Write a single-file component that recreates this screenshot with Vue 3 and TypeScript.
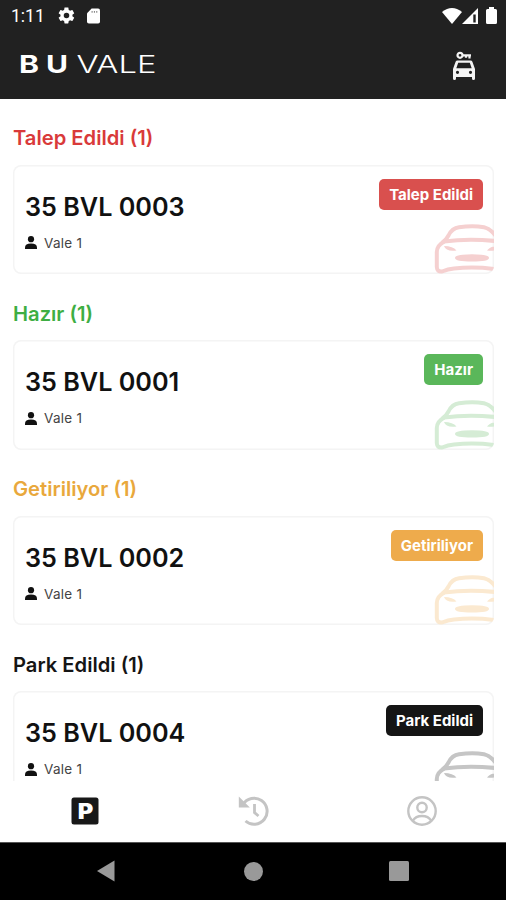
<script setup lang="ts">
interface Group {
  key: string
  label: string
  plate: string
  valet: string
}

const groups: Group[] = [
  { key: 'requested', label: 'Talep Edildi', plate: '35 BVL 0003', valet: 'Vale 1' },
  { key: 'ready', label: 'Hazır', plate: '35 BVL 0001', valet: 'Vale 1' },
  { key: 'bringing', label: 'Getiriliyor', plate: '35 BVL 0002', valet: 'Vale 1' },
  { key: 'parked', label: 'Park Edildi', plate: '35 BVL 0004', valet: 'Vale 1' },
]
</script>

<template>
  <div class="screen">
    <header class="top">
      <div class="status">
        <span class="clock">1:11</span>
        <svg class="gear" viewBox="0 0 24 24"><path fill="#fff" fill-rule="evenodd" d="M19.4 13c.1-.3.1-.7.1-1s0-.7-.1-1l2.1-1.600c.2-.2.3-.4.1-.7l-2-3.400c-.1-.2-.4-.3-.6-.2l-2.500 1c-.5-.4-1.100-.7-1.700-1L14.400 2.400c0-.2-.2-.4-.5-.4h-4c-.2 0-.5.2-.5.4L9 5.100c-.6.3-1.200.6-1.700 1l-2.500-1c-.2-.1-.5 0-.6.2l-2 3.400c-.1.2-.1.500.1.7L4.500 11c0 .3-.1.7-.1 1s0 .7.100 1l-2.200 1.600c-.2.2-.2.400-.1.700l2 3.400c.1.2.4.3.6.2l2.500-1c.5.400 1.100.7 1.700 1l.4 2.700c0 .2.200.400.500.400h4c.2 0 .500-.200.500-.400l.4-2.700c.600-.3 1.200-.6 1.700-1l2.500 1c.2.100.500 0 .600-.2l2-3.400c.1-.2.100-.500-.100-.700zM12 15.500a3.500 3.500 0 1 1 0-7 3.500 3.500 0 0 1 0 7z" /></svg>
        <svg class="sd" viewBox="0 0 14 16"><path fill="#fff" d="M5 0h7a2 2 0 0 1 2 2v12a2 2 0 0 1-2 2H2a2 2 0 0 1-2-2V5z" /><path stroke="#888" stroke-width="1.200" d="M5.500 2.500v2M8 2.500v2M10.500 2.500v2" /></svg>
        <span class="grow"></span>
        <svg class="wifi" viewBox="0 0 20 16"><path fill="#fff" d="M0 4Q10-4 20 4L10 16z" /></svg>
        <svg class="signal" viewBox="0 0 16 16"><path fill="#fff" fill-rule="evenodd" d="M16 0v16H0zM11.300 6.500v8h2.400v-8z" /></svg>
        <svg class="battery" viewBox="0 0 11 17"><path fill="#fff" d="M3 2V0h5v2h1.500Q11 2 11 3.500v12Q11 17 9.500 17h-8Q0 17 0 15.500v-12Q0 2 1.500 2z" /></svg>
      </div>
      <div class="brand">
        <svg class="logo" viewBox="0 0 144 40" fill="#fff">
          <text class="heavy" x="1" y="28" textLength="20" lengthAdjust="spacingAndGlyphs">B</text>
          <text class="heavy" x="28" y="28" textLength="22" lengthAdjust="spacingAndGlyphs">U</text>
          <text class="thin" x="58.500" y="28" textLength="80" lengthAdjust="spacingAndGlyphs">VALE</text>
        </svg>
        <svg class="carkey" viewBox="0 0 24 30">
          <path fill="none" stroke="#f4f4f4" stroke-width="2.200" d="M10 4.300h9M14 4.300v2.500M17.500 4.300v3.200" />
          <circle cx="8" cy="4.300" r="2.500" fill="none" stroke="#f4f4f4" stroke-width="2.200" />
          <path fill="#f4f4f4" fill-rule="evenodd" d="M5.500 9.500h13q1.400 0 1.900 1.300L23 18v9.500q0 1.500-1.500 1.500T20 27.500V26H4v1.500Q4 29 2.500 29T1 27.500V18l2.600-7.200Q4.100 9.500 5.500 9.500zM6.200 11.700l-1.900 5.600h15.400l-1.900-5.600zM5.500 19.700a1.600 1.600 0 1 0 0 3.200 1.600 1.600 0 0 0 0-3.200zM18.500 19.700a1.600 1.600 0 1 0 0 3.200 1.600 1.600 0 0 0 0-3.200z" />
        </svg>
      </div>
    </header>

    <main class="list">
      <section v-for="g in groups" :key="g.key" class="group" :class="g.key">
        <h2>{{ g.label }} (1)</h2>
        <article class="card">
          <div class="info">
            <div class="plate">{{ g.plate }}</div>
            <div class="valet">
              <svg viewBox="0 0 12 13"><circle cx="6" cy="3.200" r="3.100" /><path d="M0 13v-1.500Q0 7.500 6 7.500t6 4V13z" /></svg>
              <span>{{ g.valet }}</span>
            </div>
          </div>
          <span class="badge">{{ g.label }}</span>
          <svg class="car" viewBox="0 0 60 50">
            <g fill="none" stroke="currentColor" stroke-width="4" stroke-linecap="round" stroke-linejoin="round">
              <path d="M9 18Q12 16 14.500 11.500Q18 4 25 3.200Q39 1.500 50 3.200Q56 4.500 61 11" />
              <path d="M10 17.500Q36 14 66 17.500" />
              <path d="M9.500 18Q3 21.500 2.800 28V43Q3 48 8 47.500Q14 45 20 44.500Q40 42.500 60 45" />
            </g>
            <path fill="currentColor" d="M10 22Q19 22 22.500 26.500Q12 28 10 22zM65 22Q56 22 53 26.500Q63 28 65 22z" />
            <path fill="currentColor" d="M21 34Q21 30.300 38 30.300T55 34Q55 37.500 38 37.500T21 34z" />
          </svg>
        </article>
      </section>
    </main>

    <nav class="tabs">
      <div class="tab first">
        <svg viewBox="0 0 32 32"><rect x="2.500" y="2.500" width="27" height="27" rx="2.500" fill="#181818" /><text class="park" x="8.800" y="23.500" textLength="15.500" lengthAdjust="spacingAndGlyphs" fill="#fff">P</text></svg>
      </div>
      <div class="tab mid">
        <svg viewBox="0 0 32 32" fill="none" stroke="#c4c4c4"><path stroke-width="3" d="M5 9.500A13 13 0 1 1 7.500 26" /><path fill="#c4c4c4" stroke="none" d="M.8 1.500v11h11z" /><path stroke-width="2.800" d="M16.500 9v8.500l4 3.500" /></svg>
      </div>
      <div class="tab">
        <svg viewBox="0 0 32 32" fill="none" stroke="#c4c4c4" stroke-width="2.400"><circle cx="16" cy="16" r="13.700" /><circle cx="16" cy="12.500" r="4.700" /><path d="M7 25.500Q9.500 21 16 21t9 4.500" /></svg>
      </div>
    </nav>

    <footer class="system">
      <svg class="back" viewBox="0 0 18 22"><path fill="#999" d="M17.500.5v21L0 11z" /></svg>
      <span class="home"></span>
      <span class="recent"></span>
    </footer>
  </div>
</template>

<style>
body { margin: 0; }
</style>

<style scoped>
.screen { width: 506px; height: 900px; display: flex; flex-direction: column; background: #fff; font-family: Inter, "Liberation Sans", sans-serif; overflow: hidden; }
svg { display: block; flex: none; }
.top { height: 98.500px; flex: none; background: #212121; }
.status { height: 31px; display: flex; align-items: center; padding: 0 9px 0 11px; box-sizing: border-box; color: #fff; }
.clock { width: 46px; font: 400 17.500px/30px Roboto, sans-serif; padding-top: 1px; }
.gear { width: 19px; height: 19px; }
.sd { width: 13px; height: 16px; margin-left: 11px; }
.grow { flex: 1; }
.wifi { width: 20px; height: 16px; }
.signal { width: 16px; height: 16px; }
.battery { width: 11px; height: 17px; margin-left: 8px; }
.brand { height: 67px; display: flex; align-items: center; justify-content: space-between; padding: 0 30px 0 18px; }
.logo { width: 144px; height: 40px; margin-top: 1px; }
.heavy { font: 700 24px "Inter", sans-serif; }
.thin { font: 300 24px "Inter", sans-serif; }
.carkey { width: 24px; height: 30px; margin-top: 2px; }

.list { flex: 1; min-height: 0; overflow: hidden; padding: 27.500px 12px 0 13px; }
.group { margin-bottom: 27.300px; }
h2 { margin: 0 0 14.500px; height: 24px; font-size: 20.200px; line-height: 24px; font-weight: 600; white-space: nowrap; }
.card { position: relative; display: flex; justify-content: space-between; align-items: flex-start; box-sizing: border-box; height: 109.800px; box-shadow: inset 0 0 0 1.500px #f4f4f4; border-radius: 8px; overflow: hidden; padding: 14px 11px 0 12px; }
.plate { margin-top: 12px; font-size: 25.200px; line-height: 32px; font-weight: 600; color: #111; white-space: nowrap; }
.valet { display: flex; align-items: center; gap: 7px; margin-top: 11px; font-size: 13.500px; line-height: 18px; letter-spacing: .25px; color: #444; }
.valet svg { width: 12px; height: 13px; fill: #111; }
.badge { height: 31px; padding: 0 10px; border-radius: 5px; font-size: 15px; line-height: 31px; font-weight: 700; color: #fff; white-space: nowrap; }
.car { position: absolute; right: 0; bottom: 0; width: 60px; height: 50px; }

.requested h2 { color: #d93a3a; }
.requested .badge { background: #d9504e; }
.requested .car { color: #f5d0d0; }
.ready h2 { color: #3eae43; }
.ready .badge { background: #5ab75a; }
.ready .car { color: #d5ecd5; }
.bringing h2 { color: #e9a83c; }
.bringing .badge { background: #eeab4c; }
.bringing .car { color: #fbe9d0; }
.parked h2 { color: #151515; }
.parked .badge { background: #151515; }
.parked .car { color: #c5c5c5; }

.tabs { height: 61px; flex: none; display: flex; background: #fff; }
.tab { flex: 1; display: flex; align-items: center; justify-content: center; padding-bottom: 2px; }
.tab svg { width: 32px; height: 32px; }
.first { padding-left: 1px; }
.mid { padding-left: 1px; }
.park { font: 900 21px Inter, sans-serif; }
.system { height: 58px; flex: none; display: flex; align-items: center; background: #000; box-sizing: border-box; padding: 0 0 1px 97px; border-top: 1px solid #555; }
.back { width: 18px; height: 22px; }
.home { width: 19px; height: 19px; margin-left: 129px; border-radius: 50%; background: #999; }
.recent { width: 20px; height: 20px; margin-left: 126px; border-radius: 1.500px; background: #999; }
</style>
